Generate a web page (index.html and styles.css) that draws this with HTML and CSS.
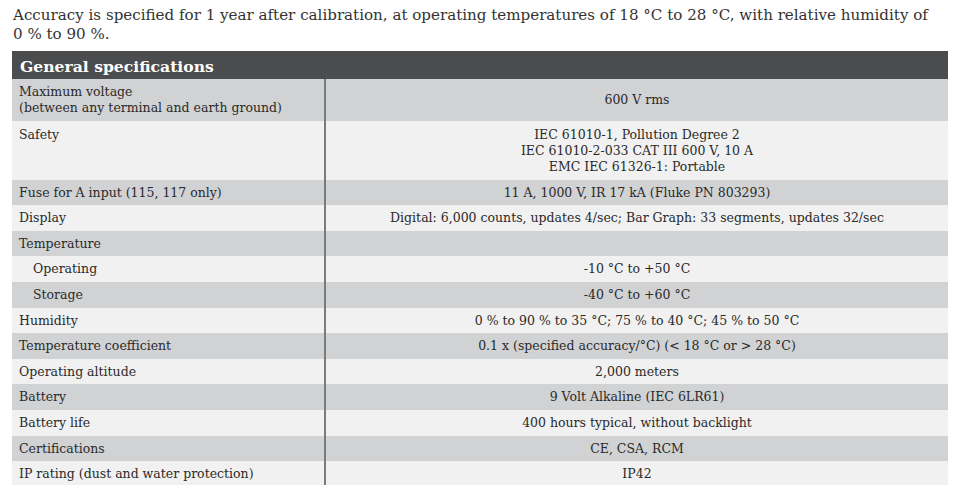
FILE: index.html
```html
<!DOCTYPE html>
<html lang="en">
<head>
<meta charset="utf-8">
<title>General specifications</title>
<link rel="stylesheet" href="styles.css">
</head>
<body>
<p class="intro">Accuracy is specified for 1 year after calibration, at operating temperatures of 18 °C to 28 °C, with relative humidity of 0 % to 90 %.</p>
<table class="spec">
  <thead>
    <tr><th colspan="2">General specifications</th></tr>
  </thead>
  <tbody>
    <tr class="dark"><td class="label">Maximum voltage<br>(between any terminal and earth ground)</td><td class="value">600 V rms</td></tr>
    <tr class="light tall"><td class="label top">Safety</td><td class="value">IEC 61010-1, Pollution Degree 2<br>IEC 61010-2-033 CAT III 600 V, 10 A<br>EMC IEC 61326-1: Portable</td></tr>
    <tr class="dark"><td class="label">Fuse for A input (115, 117 only)</td><td class="value">11 A, 1000 V, IR 17 kA (Fluke PN 803293)</td></tr>
    <tr class="light"><td class="label">Display</td><td class="value">Digital: 6,000 counts, updates 4/sec; Bar Graph: 33 segments, updates 32/sec</td></tr>
    <tr class="dark"><td class="label">Temperature</td><td class="value"></td></tr>
    <tr class="light"><td class="label sub">Operating</td><td class="value">-10 °C to +50 °C</td></tr>
    <tr class="dark"><td class="label sub">Storage</td><td class="value">-40 °C to +60 °C</td></tr>
    <tr class="light"><td class="label">Humidity</td><td class="value">0 % to 90 % to 35 °C; 75 % to 40 °C; 45 % to 50 °C</td></tr>
    <tr class="dark"><td class="label">Temperature coefficient</td><td class="value">0.1 x (specified accuracy/°C) (&lt; 18 °C or &gt; 28 °C)</td></tr>
    <tr class="light"><td class="label">Operating altitude</td><td class="value">2,000 meters</td></tr>
    <tr class="dark"><td class="label">Battery</td><td class="value">9 Volt Alkaline (IEC 6LR61)</td></tr>
    <tr class="light"><td class="label">Battery life</td><td class="value">400 hours typical, without backlight</td></tr>
    <tr class="dark"><td class="label">Certifications</td><td class="value">CE, CSA, RCM</td></tr>
    <tr class="light"><td class="label">IP rating (dust and water protection)</td><td class="value">IP42</td></tr>
  </tbody>
</table>
</body>
</html>
```
FILE: styles.css
```css
html, body {
  margin: 0;
  padding: 0;
  background: #ffffff;
}
body {
  padding: 6px 12px 0 12px;
  font-family: "DejaVu Serif", "Liberation Serif", serif;
  color: #2a2a2a;
}
.intro {
  margin: 0 0 7px 1px;
  font-size: 15.1px;
  line-height: 19px;
  color: #333333;
  width: 918px;
}
.spec {
  width: 936px;
  border-collapse: collapse;
  font-size: 12.5px;
  line-height: 16px;
}
.spec th {
  background: #4b4c4e;
  color: #ffffff;
  text-align: left;
  font-weight: bold;
  font-size: 15.6px;
  height: 25px;
  padding: 3px 0 0 8px;
  line-height: 25px;
}
.spec td {
  padding: 5px 0 4.6px 0;
  vertical-align: middle;
}
.spec tr.tall td {
  padding-top: 6.5px;
  padding-bottom: 4.5px;
}
.spec td.label {
  width: 305px;
  padding-left: 7px;
  border-right: 2px solid #7b7b7b;
}
.spec td.label.top {
  vertical-align: top;
}
.spec td.label.sub {
  padding-left: 21px;
  width: 291px;
}
.spec td.value {
  text-align: center;
}
.spec tr.dark td {
  background: #d1d2d4;
}
.spec tr.light td {
  background: #f1f1f1;
}
```
